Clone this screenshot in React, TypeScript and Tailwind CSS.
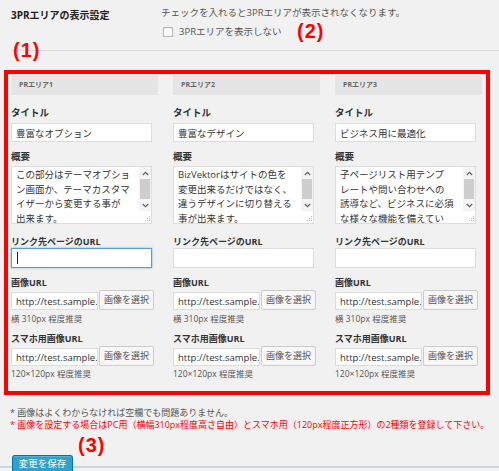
import React from "react";

type PrArea = {
  n: number;
  title: string;
  lines: string[];
  focused?: boolean;
};

const areas: PrArea[] = [
  {
    n: 1,
    title: "豊富なオプション",
    lines: ["この部分はテーマオプショ", "ン画面か、テーマカスタマ", "イザーから変更する事が", "出来ます。"],
    focused: true,
  },
  {
    n: 2,
    title: "豊富なデザイン",
    lines: ["BizVektorはサイトの色を", "変更出来るだけではなく、", "違うデザインに切り替える", "事が出来ます。"],
  },
  {
    n: 3,
    title: "ビジネス用に最適化",
    lines: ["子ページリスト用テンプ", "レートや問い合わせへの", "誘導など、ビジネスに必須", "な様々な機能を備えてい"],
  },
];

function Chevron({ up }: { up?: boolean }) {
  return (
    <svg width="7" height="5" viewBox="0 0 7 5" aria-hidden>
      <path
        d={up ? "M0.8 4 L3.5 1.3 L6.2 4" : "M0.8 1 L3.5 3.7 L6.2 1"}
        fill="none"
        stroke="#606060"
        strokeWidth="1.2"
      />
    </svg>
  );
}

function Grip() {
  return (
    <svg width="8" height="8" viewBox="0 0 8 8" aria-hidden>
      <rect x="6" y="1" width="1" height="1" fill="#bbb" />
      <rect x="4" y="3" width="1" height="1" fill="#bbb" />
      <rect x="6" y="3" width="1" height="1" fill="#bbb" />
      <rect x="2" y="5" width="1" height="1" fill="#bbb" />
      <rect x="4" y="5" width="1" height="1" fill="#bbb" />
      <rect x="6" y="5" width="1" height="1" fill="#bbb" />
    </svg>
  );
}

function FakeTextarea({ lines }: { lines: string[] }) {
  return (
    <div className="mt-[2px] flex h-[58px] w-[141px] border border-[#dddddd] bg-white">
      <div className="min-w-0 flex-1 overflow-hidden pl-[4px] pt-[1px] text-[9.5px] leading-[14.5px] text-[#333]">
        {lines.map((l) => (
          <div key={l} className="whitespace-nowrap">
            {l}
          </div>
        ))}
      </div>
      <div className="flex w-[12px] flex-col bg-[#f4f4f4]">
        <div className="flex h-[12px] items-center justify-center">
          <Chevron up />
        </div>
        <div className="mx-[1px] h-[20px] bg-[#cdcdcd]" />
        <div className="flex h-[12px] items-center justify-center">
          <Chevron />
        </div>
        <div className="flex h-[12px] items-end justify-end bg-white">
          <Grip />
        </div>
      </div>
    </div>
  );
}

function ImageRow({ value }: { value: string }) {
  return (
    <div className="mt-[1px] flex items-end gap-[1px]">
      <input
        readOnly
        value={value}
        className="h-[18px] w-[87px] border border-[#dddddd] bg-white pl-[4px] text-[9.5px] text-[#333] outline-none"
      />
      <button
        type="button"
        className="h-[20px] w-[55px] rounded-[2px] border border-[#cccccc] bg-[#f7f7f7] text-[9px] text-[#555]"
      >
        画像を選択
      </button>
    </div>
  );
}

function PrColumn({ area }: { area: PrArea }) {
  return (
    <div className="flex flex-col">
      <div className="mt-[1px] flex h-[20px] items-center bg-[#e5e5e5] pl-[8px] text-[7px] font-bold text-[#666]">
        PRエリア{area.n}
      </div>

      <div className="mt-[11px] h-[14px] text-[9.5px] font-bold leading-[14px] text-[#333]">タイトル</div>
      <input
        readOnly
        value={area.title}
        className="mt-[3px] h-[19px] w-[141px] border border-[#dddddd] bg-white pl-[4px] text-[9.5px] text-[#333] outline-none"
      />

      <div className="mt-[8px] h-[14px] text-[9.5px] font-bold leading-[14px] text-[#333]">概要</div>
      <FakeTextarea lines={area.lines} />

      <div className="mt-[12px] h-[12px] text-[9px] font-bold leading-[12px] text-[#333]">
        リンク先ページのURL
      </div>
      {area.focused ? (
        <div className="flex h-[20px] w-[141px] items-center border border-[#5b9dd9] bg-white pl-[5px] shadow-[0_0_2px_rgba(30,140,190,0.6)]">
          <span className="h-[12px] w-px bg-[#222]" />
        </div>
      ) : (
        <input
          readOnly
          value=""
          className="h-[20px] w-[141px] border border-[#dddddd] bg-white outline-none"
        />
      )}

      <div className="mt-[9px] h-[12px] text-[9px] font-bold leading-[12px] text-[#333]">画像URL</div>
      <ImageRow value="http://test.sample.com/wp-content/uploads/pr1.jpg" />
      <div className="mt-[3px] h-[12px] text-[8.5px] leading-[12px] text-[#555]">横 310px 程度推奨</div>

      <div className="mt-[8px] h-[12px] text-[9px] font-bold leading-[12px] text-[#333]">スマホ用画像URL</div>
      <ImageRow value="http://test.sample.com/wp-content/uploads/pr1s.jpg" />
      <div className="mt-[2px] h-[12px] text-[8.5px] leading-[12px] text-[#555]">120×120px 程度推奨</div>
    </div>
  );
}

export default function App() {
  return (
    <div className="relative h-[471px] w-[499px] overflow-hidden bg-[#f1f1f1] font-['Open_Sans','Noto_Sans_CJK_JP',sans-serif]">
      {/* header row */}
      <div className="flex h-[50px]">
        <div className="w-[161px] pl-[11px] pt-[8px] text-[10px] font-bold leading-[14px] text-[#222]">
          3PRエリアの表示設定
        </div>
        <div className="flex flex-col pt-[6px]">
          <p className="h-[14px] text-[9.5px] leading-[14px] text-[#555]">
            チェックを入れると3PRエリアが表示されなくなります。
          </p>
          <label className="mt-[5px] flex h-[14px] items-center gap-[6px] pl-[2px] text-[9.5px] leading-[14px] text-[#555]">
            <span className="h-[10px] w-[10px] border border-[#b4b9be] bg-white shadow-[inset_0_1px_2px_rgba(0,0,0,0.1)]" />
            3PRエリアを表示しない
          </label>
        </div>
      </div>
      <div className="ml-[12px] h-px bg-[#dcdcdc]" />

      {/* PR areas */}
      <div className="ml-[4px] mt-[19px] w-[486px] border-4 border-[#ff0000]">
        <div className="grid grid-cols-[147px_147px_147px] gap-x-[15px] pl-[3px] pb-[11px]">
          {areas.map((a) => (
            <PrColumn key={a.n} area={a} />
          ))}
        </div>
      </div>

      {/* notes */}
      <div className="mt-[12px] pl-[10px] text-[9px] leading-[12px]">
        <p className="h-[12px] text-[#555]">* 画像はよくわからなければ空欄でも問題ありません。</p>
        <p className="h-[12px] whitespace-nowrap text-[#ff0000]">
          * 画像を設定する場合はPC用（横幅310px程度高さ自由）とスマホ用（120px程度正方形）の2種類を登録して下さい。
        </p>
      </div>

      <div className="ml-[12px] mt-[18px] h-[17px]">
        <button
          type="button"
          className="h-[17px] w-[61px] rounded-t-[3px] border border-b-0 border-[#0074a2] bg-[#2ea2cc] text-[9.5px] leading-[14px] text-white shadow-[inset_0_1px_0_rgba(120,200,230,0.5)]"
        >
          変更を保存
        </button>
      </div>
      <div className="h-[2px] bg-[#c5d9de]" />

      {/* annotation overlays */}
      <span className="absolute left-[13px] top-[40px] font-['Liberation_Sans',sans-serif] text-[20px] font-bold leading-[20px] tracking-[1px] text-[#ff0000]">
        (1)
      </span>
      <span className="absolute left-[297px] top-[21px] font-['Liberation_Sans',sans-serif] text-[20px] font-bold leading-[20px] tracking-[1px] text-[#ff0000]">
        (2)
      </span>
      <span className="absolute left-[78px] top-[435px] font-['Liberation_Sans',sans-serif] text-[20px] font-bold leading-[20px] tracking-[1px] text-[#ff0000]">
        (3)
      </span>
    </div>
  );
}
